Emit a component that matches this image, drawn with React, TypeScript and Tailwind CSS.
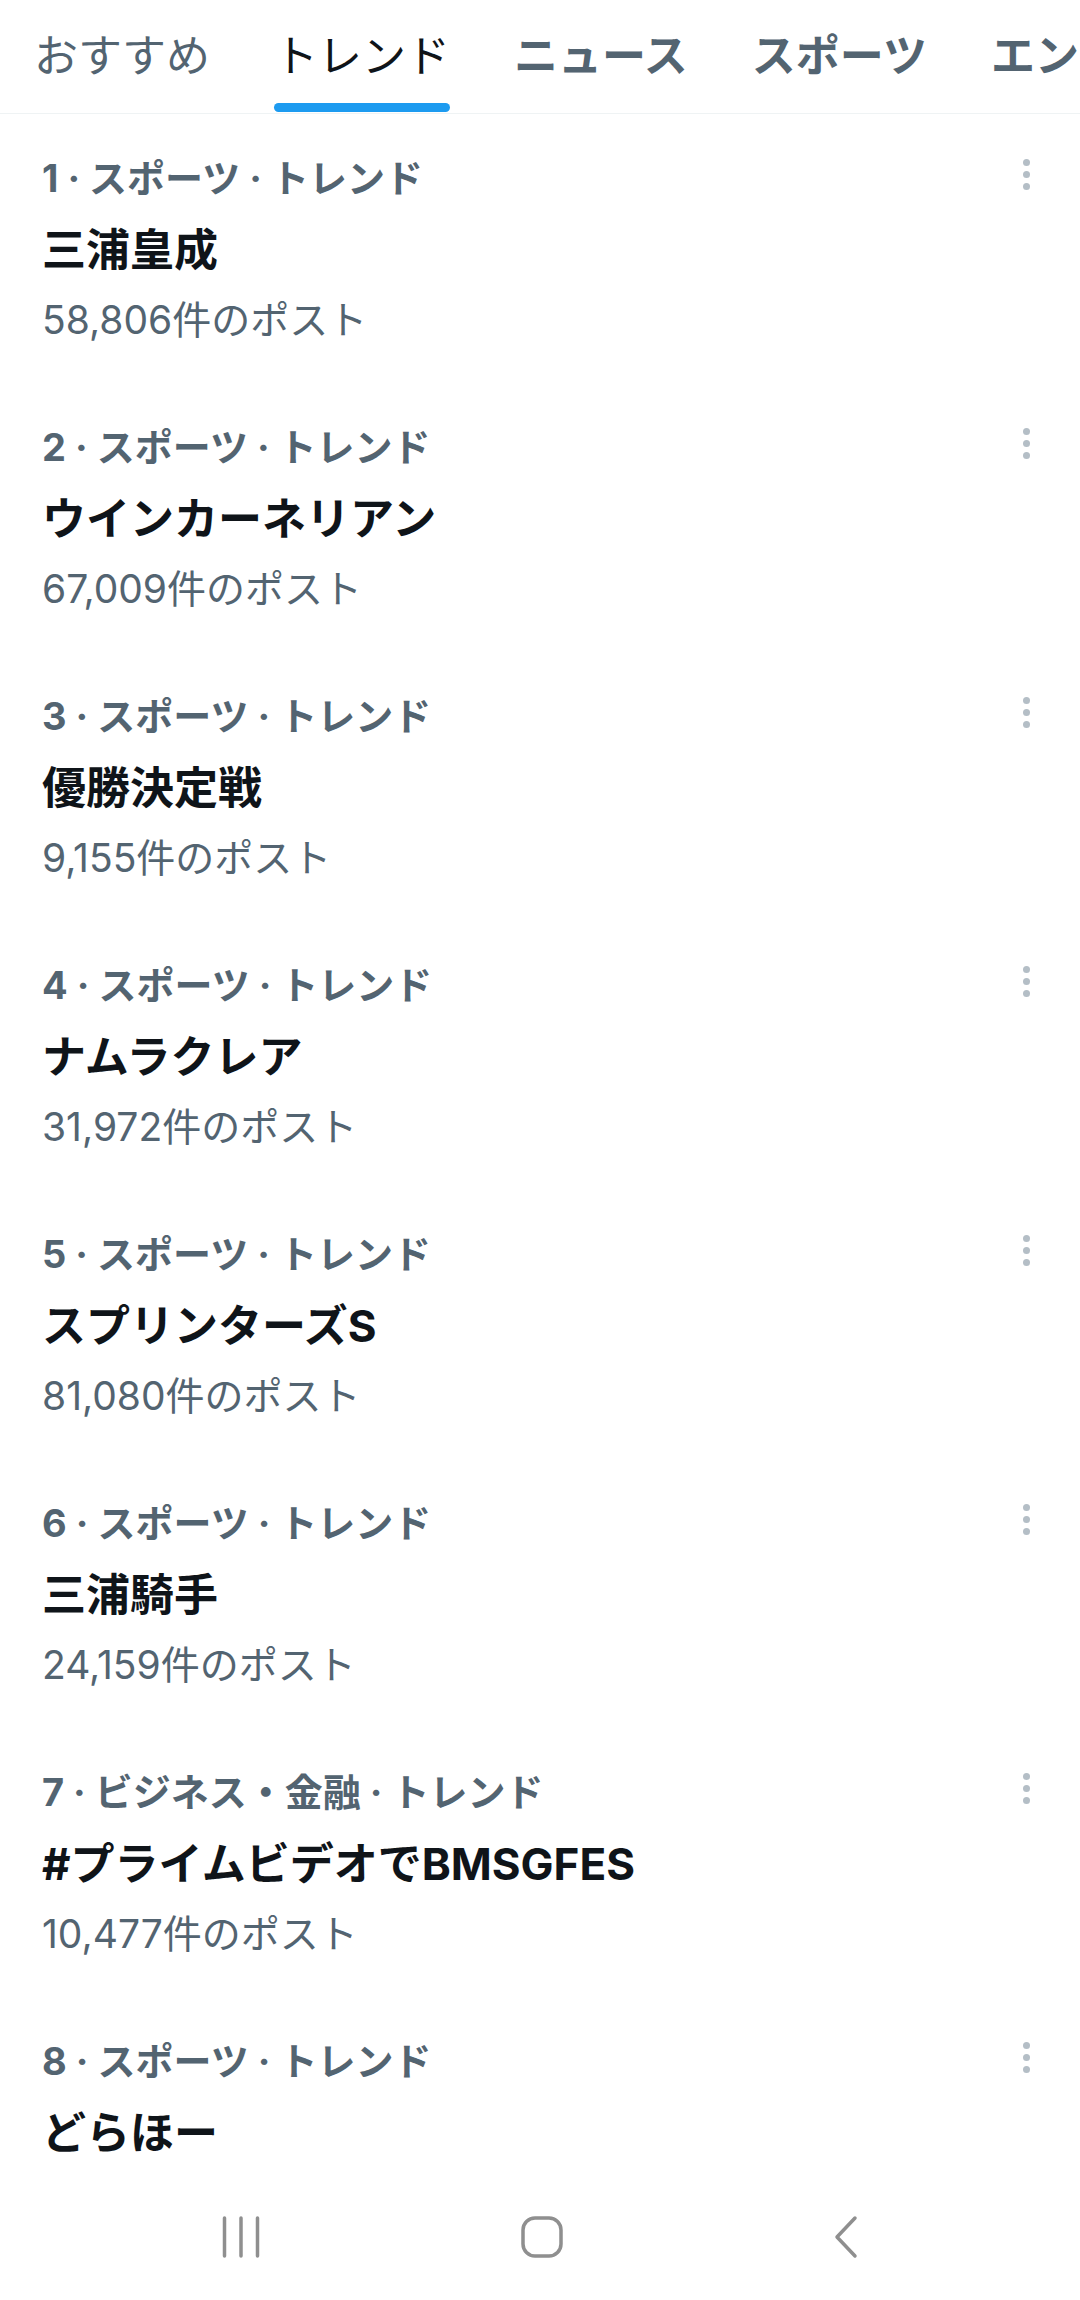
import React from "react";

interface Trend {
  rank: number;
  category: string;
  title: string;
  count: string;
}

const trends: Trend[] = [
  { rank: 1, category: "スポーツ", title: "三浦皇成", count: "58,806" },
  { rank: 2, category: "スポーツ", title: "ウインカーネリアン", count: "67,009" },
  { rank: 3, category: "スポーツ", title: "優勝決定戦", count: "9,155" },
  { rank: 4, category: "スポーツ", title: "ナムラクレア", count: "31,972" },
  { rank: 5, category: "スポーツ", title: "スプリンターズS", count: "81,080" },
  { rank: 6, category: "スポーツ", title: "三浦騎手", count: "24,159" },
  { rank: 7, category: "ビジネス・金融", title: "#プライムビデオでBMSGFES", count: "10,477" },
  { rank: 8, category: "スポーツ", title: "どらほー", count: "12,034" },
];

const tabs = [
  { label: "おすすめ", active: false, bold: false },
  { label: "トレンド", active: true, bold: false },
  { label: "ニュース", active: false, bold: true },
  { label: "スポーツ", active: false, bold: true },
  { label: "エンタメ", active: false, bold: true },
];

function TrendRow({ trend }: { trend: Trend }) {
  return (
    <div className="flex items-start h-[269px] shrink-0">
      <div className="flex-1 pl-[42px] pt-[40px]">
        {/* category line */}
        <div className="text-[38px] leading-[48px] font-bold text-[#536471] whitespace-nowrap">
          {trend.rank} · {trend.category} · トレンド
        </div>
        {/* title */}
        <div className="mt-[24px] text-[44px] leading-[48px] font-bold text-[#0f1419] whitespace-nowrap">
          {trend.title}
        </div>
        {/* posts */}
        <div className="mt-[22px] text-[39px] leading-[48px] text-[#536471] whitespace-nowrap">
          {trend.count}件のポスト
        </div>
      </div>
      {/* more button */}
      <div className="mt-[45px] mr-[50px] flex flex-col gap-[5px]">
        <span className="w-[7px] h-[7px] rounded-full bg-[#b4bec6]" />
        <span className="w-[7px] h-[7px] rounded-full bg-[#b4bec6]" />
        <span className="w-[7px] h-[7px] rounded-full bg-[#b4bec6]" />
      </div>
    </div>
  );
}

export default function App() {
  return (
    <div className="w-[1080px] h-[2300px] bg-white flex flex-col overflow-hidden font-['Inter','Noto_Sans_CJK_JP',sans-serif]">
      {/* tab bar */}
      <div className="flex shrink-0 h-[114px] pl-[2px] border-b border-[#eff3f4] overflow-hidden whitespace-nowrap">
        {tabs.map((tab) => (
          <div key={tab.label} className="flex flex-col items-center px-[32px] pt-[28px] shrink-0">
            <span
              className={`text-[44px] leading-[56px] ${tab.bold ? "font-bold" : "font-normal"} ${
                tab.active ? "text-[#0f1419]" : "text-[#536471]"
              }`}
            >
              {tab.label}
            </span>
            {tab.active && <span className="mt-[19px] h-[9px] w-full rounded-full bg-[#1d9bf0]" />}
          </div>
        ))}
      </div>

      {/* trends list */}
      <div className="flex-1 flex flex-col overflow-hidden">
        {trends.map((t) => (
          <TrendRow key={t.rank} trend={t} />
        ))}
      </div>

      {/* android nav bar */}
      <div className="h-[134px] shrink-0 bg-white flex items-center pt-[8px] pl-[222px]">
        <svg width="38" height="42" viewBox="0 0 38 42" fill="none" stroke="#8f8f8f" strokeWidth="3.5" strokeLinecap="round">
          <line x1="2.5" y1="2" x2="2.5" y2="40" />
          <line x1="19" y1="2" x2="19" y2="40" />
          <line x1="35.5" y1="2" x2="35.5" y2="40" />
        </svg>
        <svg className="ml-[261px]" width="42" height="42" viewBox="0 0 42 42" fill="none" stroke="#8f8f8f" strokeWidth="3.5">
          <rect x="2" y="2" width="38" height="38" rx="12" />
        </svg>
        <svg className="ml-[270px]" width="26" height="44" viewBox="0 0 26 44" fill="none" stroke="#8f8f8f" strokeWidth="3.5" strokeLinecap="round" strokeLinejoin="round">
          <polyline points="22,3 4,22 22,41" />
        </svg>
      </div>
    </div>
  );
}
